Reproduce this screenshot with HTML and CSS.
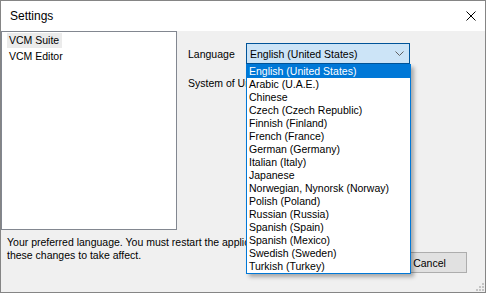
FILE: index.html
```html
<!DOCTYPE html>
<html lang="en">
<head>
  <meta charset="UTF-8" />
  <title>Settings</title>
  <link rel="stylesheet" href="styles.css">
</head>
<body>
  <div class="window">
    <div class="titlebar">
      <span class="title">Settings</span>
      <svg class="close" width="10" height="10" viewBox="0 0 10 10">
        <path d="M0.5 0.5 L9.5 9.5 M9.5 0.5 L0.5 9.5" stroke="#000" stroke-width="1" fill="none"/>
      </svg>
    </div>
    <div class="client">
      <div class="top">
        <div class="tree">
          <div class="node"><span class="node-text selected">VCM Suite</span></div>
          <div class="node"><span class="node-text">VCM Editor</span></div>
        </div>
        <div class="panel">
          <div class="field">
            <span class="field-label">Language</span>
            <div class="combo-wrap">
              <div class="combo open">
                <span class="combo-value">English (United States)</span>
                <svg class="chevron" width="9" height="5" viewBox="0 0 9 5"><path d="M0.5 0.5 L4.5 4.5 L8.5 0.5" stroke="#606060" fill="none"/></svg>
              </div>
              <ul class="dropdown">
                <li class="active">English (United States)</li>
                <li>Arabic (U.A.E.)</li>
                <li>Chinese</li>
                <li>Czech (Czech Republic)</li>
                <li>Finnish (Finland)</li>
                <li>French (France)</li>
                <li>German (Germany)</li>
                <li>Italian (Italy)</li>
                <li>Japanese</li>
                <li>Norwegian, Nynorsk (Norway)</li>
                <li>Polish (Poland)</li>
                <li>Russian (Russia)</li>
                <li>Spanish (Spain)</li>
                <li>Spanish (Mexico)</li>
                <li>Swedish (Sweden)</li>
                <li>Turkish (Turkey)</li>
              </ul>
            </div>
          </div>
          <div class="field">
            <span class="field-label clipped">System of Units</span>
            <div class="combo-wrap">
              <div class="combo">
                <svg class="chevron" width="9" height="5" viewBox="0 0 9 5"><path d="M0.5 0.5 L4.5 4.5 L8.5 0.5" stroke="#606060" fill="none"/></svg>
              </div>
            </div>
          </div>
        </div>
      </div>
      <div class="bottom">
        <div class="desc-box">
          <p class="desc">Your preferred language. You must restart the application for<br>these changes to take affect.</p>
        </div>
        <div class="buttons">
          <button class="btn">Cancel</button>
        </div>
      </div>
      <svg class="grip" width="9" height="9" viewBox="0 0 9 9">
        <rect x="7" y="1" width="2" height="2" fill="#c4c4c4"/>
        <rect x="4" y="4" width="2" height="2" fill="#c4c4c4"/>
        <rect x="7" y="4" width="2" height="2" fill="#c4c4c4"/>
        <rect x="1" y="7" width="2" height="2" fill="#c4c4c4"/>
        <rect x="4" y="7" width="2" height="2" fill="#c4c4c4"/>
        <rect x="7" y="7" width="2" height="2" fill="#c4c4c4"/>
      </svg>
    </div>
  </div>
</body>
</html>
```

FILE: styles.css
```css
body { margin: 0; background: #fff; font-family: "Liberation Sans", Arial, sans-serif; font-size: 10.5px; color: #000; }

.window {
  width: 486px;
  height: 293px;
  box-sizing: border-box;
  border: 1px solid #858585;
  display: flex;
  flex-direction: column;
}
.titlebar {
  height: 30px;
  background: #fff;
  display: flex;
  align-items: center;
  padding: 0 9px 0 9px;
}
.title { font-size: 12px; }
.close { margin-left: auto; }

.client {
  flex: 1;
  background: #f0f0f0;
  position: relative;
  display: flex;
  flex-direction: column;
}
.top { display: flex; height: 199px; }

.tree {
  width: 176px;
  box-sizing: border-box;
  border: 1px solid #828790;
  background: #fff;
  padding: 1px 0 0 5px;
}
.node { height: 16px; }
.node-text { display: inline-block; line-height: 15px; padding: 0 3px 0 2px; }
.node-text.selected { background: #ebebeb; }

.panel { flex: 1; padding: 12px 0 0 11px; }
.field { display: flex; align-items: center; height: 21px; margin-bottom: 8px; }
.field-label { width: 58px; flex-shrink: 0; white-space: nowrap; }
.field-label.clipped { overflow: hidden; }

.combo-wrap { position: relative; }
.combo {
  width: 164px;
  height: 21px;
  box-sizing: border-box;
  border: 1px solid #7a7a7a;
  background: #e5e5e5;
  display: flex;
  align-items: center;
  padding: 0 5px 0 3px;
}
.combo.open { background: #cce4f7; border-color: #005499; }
.chevron { margin-left: auto; }

.dropdown {
  position: absolute;
  top: 21px;
  left: 0;
  z-index: 2;
  width: 165px;
  box-sizing: border-box;
  margin: 0;
  padding: 0;
  list-style: none;
  background: #fff;
  border: 1px solid #0078d7;
  box-shadow: 3px 3px 4px rgba(0,0,0,0.3);
}
.dropdown li { height: 13px; line-height: 13px; padding: 0 2px; white-space: nowrap; }
.dropdown li.active { background: #0078d7; color: #fff; }

.bottom { flex: 1; display: flex; }
.desc-box { width: 245px; overflow: hidden; }
.desc {
  margin: 0;
  padding: 6px 0 0 6px;
  line-height: 13px;
  white-space: nowrap;
}
.buttons { margin-left: auto; display: flex; gap: 6px; padding: 22px 18px 0 0; }
.btn {
  width: 75px;
  height: 21px;
  background: #e1e1e1;
  border: 1px solid #adadad;
  font-family: inherit;
  font-size: 10.5px;
  color: #000;
  padding: 0;
}

.grip { position: absolute; right: 1px; bottom: 1px; }
```
